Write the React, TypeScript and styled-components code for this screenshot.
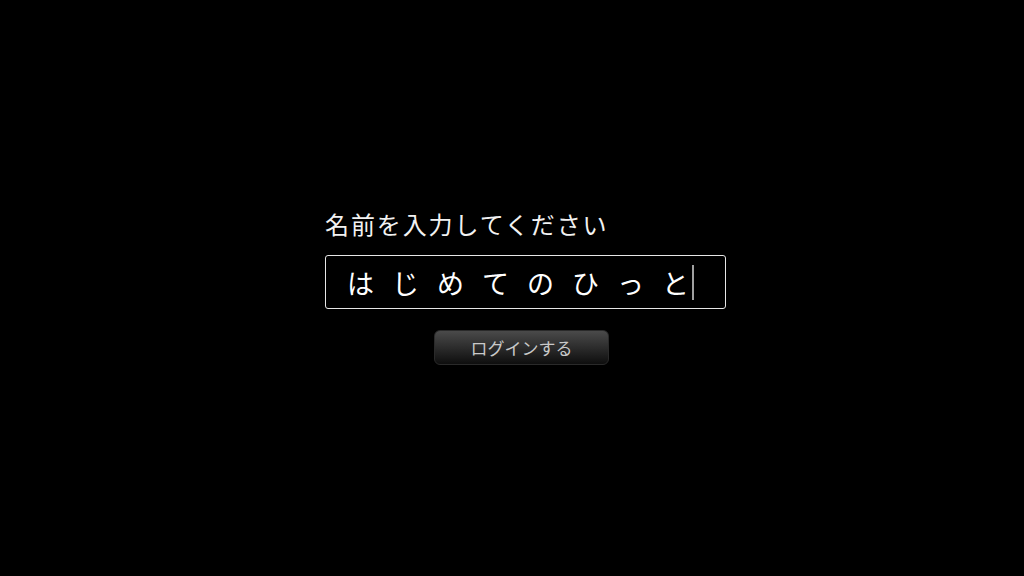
import styled, { createGlobalStyle } from 'styled-components'

const GlobalStyle = createGlobalStyle`
  html, body {
    margin: 0;
    padding: 0;
    background: #000;
  }
  body {
    font-family: "Noto Sans CJK JP", "Noto Sans", sans-serif;
  }
`

const App = () => {
  return (
    <Page>
      <GlobalStyle />
      <Form>
        <Label>名前を入力してください</Label>

        <NameField>
          <NameText>はじめてのひっと</NameText>
          <Caret />
        </NameField>

        <LoginButton type='button'>ログインする</LoginButton>
      </Form>
    </Page>
  )
}

export default App

const Page = styled.div`
    width: 1024px;
    height: 576px;
    background: #000;
    box-sizing: border-box;
    padding: 206px 0 0 325px;
`

const Form = styled.div`
    width: 401px;
    display: flex;
    flex-direction: column;
`

const Label = styled.div`
    color: #f2f2f2;
    font-size: 24px;
    line-height: 36px;
    letter-spacing: 1.9px;
    margin-bottom: 13px;
`

const NameField = styled.div`
    height: 54px;
    box-sizing: border-box;
    border: 1.5px solid #e6e6e6;
    border-radius: 3px;
    display: flex;
    align-items: center;
    padding-left: 21px;
`

const NameText = styled.span`
    color: #fff;
    font-size: 27px;
    letter-spacing: 18px;
    margin-right: -15px;
`

const Caret = styled.span`
    width: 2px;
    height: 35px;
    background: #a0a0a0;
`

const LoginButton = styled.button`
    align-self: center;
    margin: 21px 8px 0 0;
    width: 175px;
    height: 35px;
    border: 1px solid #2a2a2a;
    border-radius: 6px;
    background: linear-gradient(to bottom, #4a4a4a 0%, #2c2c2c 50%, #0e0e0e 100%);
    color: #c9c9c9;
    font-family: "Noto Sans CJK JP", "Noto Sans", sans-serif;
    font-size: 17px;
    padding: 0;
    cursor: pointer;
`
